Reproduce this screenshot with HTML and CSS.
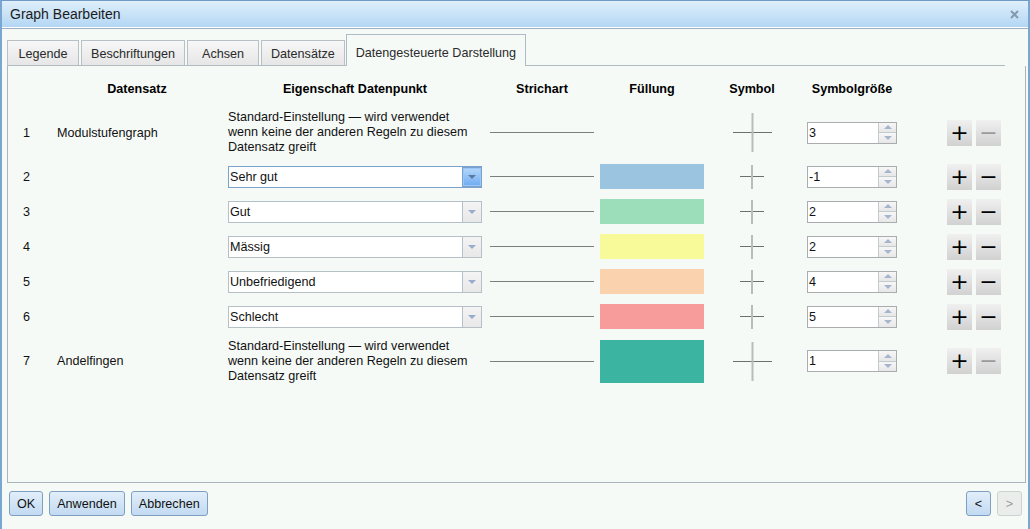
FILE: index.html
```html
<!DOCTYPE html>
<html lang="de">
<head>
    <meta charset="UTF-8">
    <title>Graph Bearbeiten</title>
    <link rel="stylesheet" href="styles.css">
</head>
<body>
<div class="window">
    <div class="titlebar">
        <span>Graph Bearbeiten</span>
        <svg class="close" width="9" height="9" viewBox="0 0 9 9"><path d="M1 1L8 8M8 1L1 8" stroke="#8499ad" stroke-width="2"/></svg>
    </div>

    <div class="tabs">
        <div class="tab">Legende</div>
        <div class="tab">Beschriftungen</div>
        <div class="tab">Achsen</div>
        <div class="tab">Datensätze</div>
        <div class="tab active">Datengesteuerte Darstellung</div>
    </div>

    <div class="panel">
        <div class="rule head">
            <div></div>
            <div class="h-name">Datensatz</div>
            <div class="center">Eigenschaft Datenpunkt</div>
            <div class="h-line">Strichart</div>
            <div class="center">Füllung</div>
            <div class="center">Symbol</div>
            <div class="h-size">Symbolgröße</div>
            <div></div>
        </div>

        <!-- Standardregel -->
        <div class="rule tall">
            <div class="num">1</div>
            <div>Modulstufengraph</div>
            <div class="prop">Standard-Einstellung — wird verwendet<br>wenn keine der anderen Regeln zu diesem<br>Datensatz greift</div>
            <div><div class="stroke"></div></div>
            <div></div>
            <div class="sym"><svg width="39" height="39"><line x1="0" y1="19.5" x2="39" y2="19.5" stroke="#6e706e"/><line x1="19.5" y1="0" x2="19.5" y2="39" stroke="#b9bcb8" stroke-width="2"/></svg></div>
            <div><div class="spinner"><span>3</span><div class="spin"><i class="up"></i><i class="down"></i></div></div></div>
            <div class="actions"><button class="btn-plus">+</button><button class="btn-minus disabled">−</button></div>
        </div>

        <div class="rule">
            <div class="num">2</div>
            <div></div>
            <div><div class="combo focus"><span>Sehr gut</span><div class="trigger"><i></i></div></div></div>
            <div><div class="stroke"></div></div>
            <div><div class="fill" style="background:#9bc4e0"></div></div>
            <div class="sym"><svg width="24" height="24"><line x1="0" y1="11.5" x2="24" y2="11.5" stroke="#6e706e"/><line x1="12" y1="0" x2="12" y2="24" stroke="#b9bcb8" stroke-width="2"/></svg></div>
            <div><div class="spinner"><span>-1</span><div class="spin"><i class="up"></i><i class="down"></i></div></div></div>
            <div class="actions"><button class="btn-plus">+</button><button class="btn-minus">−</button></div>
        </div>

        <div class="rule">
            <div class="num">3</div>
            <div></div>
            <div><div class="combo"><span>Gut</span><div class="trigger"><i></i></div></div></div>
            <div><div class="stroke"></div></div>
            <div><div class="fill" style="background:#9ddeba"></div></div>
            <div class="sym"><svg width="24" height="24"><line x1="0" y1="11.5" x2="24" y2="11.5" stroke="#6e706e"/><line x1="12" y1="0" x2="12" y2="24" stroke="#b9bcb8" stroke-width="2"/></svg></div>
            <div><div class="spinner"><span>2</span><div class="spin"><i class="up"></i><i class="down"></i></div></div></div>
            <div class="actions"><button class="btn-plus">+</button><button class="btn-minus">−</button></div>
        </div>

        <div class="rule">
            <div class="num">4</div>
            <div></div>
            <div><div class="combo"><span>Mässig</span><div class="trigger"><i></i></div></div></div>
            <div><div class="stroke"></div></div>
            <div><div class="fill" style="background:#f8fa99"></div></div>
            <div class="sym"><svg width="24" height="24"><line x1="0" y1="11.5" x2="24" y2="11.5" stroke="#6e706e"/><line x1="12" y1="0" x2="12" y2="24" stroke="#b9bcb8" stroke-width="2"/></svg></div>
            <div><div class="spinner"><span>2</span><div class="spin"><i class="up"></i><i class="down"></i></div></div></div>
            <div class="actions"><button class="btn-plus">+</button><button class="btn-minus">−</button></div>
        </div>

        <div class="rule">
            <div class="num">5</div>
            <div></div>
            <div><div class="combo"><span>Unbefriedigend</span><div class="trigger"><i></i></div></div></div>
            <div><div class="stroke"></div></div>
            <div><div class="fill" style="background:#fad3ae"></div></div>
            <div class="sym"><svg width="24" height="24"><line x1="0" y1="11.5" x2="24" y2="11.5" stroke="#6e706e"/><line x1="12" y1="0" x2="12" y2="24" stroke="#b9bcb8" stroke-width="2"/></svg></div>
            <div><div class="spinner"><span>4</span><div class="spin"><i class="up"></i><i class="down"></i></div></div></div>
            <div class="actions"><button class="btn-plus">+</button><button class="btn-minus">−</button></div>
        </div>

        <div class="rule">
            <div class="num">6</div>
            <div></div>
            <div><div class="combo"><span>Schlecht</span><div class="trigger"><i></i></div></div></div>
            <div><div class="stroke"></div></div>
            <div><div class="fill" style="background:#f89b9b"></div></div>
            <div class="sym"><svg width="24" height="24"><line x1="0" y1="11.5" x2="24" y2="11.5" stroke="#6e706e"/><line x1="12" y1="0" x2="12" y2="24" stroke="#b9bcb8" stroke-width="2"/></svg></div>
            <div><div class="spinner"><span>5</span><div class="spin"><i class="up"></i><i class="down"></i></div></div></div>
            <div class="actions"><button class="btn-plus">+</button><button class="btn-minus">−</button></div>
        </div>

        <!-- Standardregel zweiter Datensatz -->
        <div class="rule last">
            <div class="num">7</div>
            <div>Andelfingen</div>
            <div class="prop">Standard-Einstellung — wird verwendet<br>wenn keine der anderen Regeln zu diesem<br>Datensatz greift</div>
            <div><div class="stroke"></div></div>
            <div><div class="fill big" style="background:#3bb5a1"></div></div>
            <div class="sym"><svg width="39" height="39"><line x1="0" y1="19.5" x2="39" y2="19.5" stroke="#6e706e"/><line x1="19.5" y1="0" x2="19.5" y2="39" stroke="#b9bcb8" stroke-width="2"/></svg></div>
            <div><div class="spinner"><span>1</span><div class="spin"><i class="up"></i><i class="down"></i></div></div></div>
            <div class="actions"><button class="btn-plus">+</button><button class="btn-minus disabled">−</button></div>
        </div>
    </div>

    <div class="footer">
        <button class="button">OK</button>
        <button class="button">Anwenden</button>
        <button class="button">Abbrechen</button>
        <div class="nav">
            <button class="button nav-btn">&lt;</button>
            <button class="button nav-btn off">&gt;</button>
        </div>
    </div>
</div>
</body>
</html>
```

FILE: styles.css
```css
body {
    margin: 0;
    font-family: "Liberation Sans", Arial, sans-serif;
    font-size: 12.6px;
    color: #111;
    background-color: #f6faf7;
}
.window {
    height: 529px;
    box-sizing: border-box;
    border-top: 1px solid #6f9bc6;
    border-left: 2px solid #7aa6d2;
    border-right: 2px solid #7aa6d2;
    overflow: hidden;
}
.titlebar {
    height: 26px;
    line-height: 25px;
    padding: 0 9px 0 8px;
    font-size: 14px;
    color: #1b1b1b;
    background: linear-gradient(#dfeffb, #b3d6f4);
    border-bottom: 1px solid #fff;
    box-shadow: 0 1px 0 #9fb1c0;
    display: flex;
    justify-content: space-between;
    align-items: center;
}
.tabs {
    display: flex;
    align-items: flex-end;
    height: 31px;
    margin: 6px 23px 0 5px;
    border-bottom: 1px solid #b1bcc2;
}
.tab {
    box-sizing: border-box;
    min-width: 72px;
    height: 25px;
    line-height: 23px;
    padding: 2px 9px 0;
    margin-right: 2px;
    text-align: center;
    color: #2a2a2a;
    border: 1px solid #b8c0c5;
    border-bottom: none;
    background: linear-gradient(#f7f7f7, #e6e6e6);
}
.tab.active {
    height: 32px;
    line-height: 26px;
    padding-top: 5px;
    margin: 0 0 -1px -1px;
    background: #f6faf7;
    border-color: #adbcc6;
}
.panel {
    height: 410px;
    margin: 0 2px 0 5px;
    border: 1px solid #aab6bc;
    border-top: none;
    padding-top: 6px;
}
.rule {
    display: grid;
    grid-template-columns: 49px 171px 262px 110px 104px 96px 147px 54px;
    align-items: center;
    height: 35px;
}
.rule.head {
    height: 34px;
    font-weight: bold;
    color: #000;
}
.rule.tall {
    height: 53px;
}
.rule.last {
    height: 54px;
}
.center {
    text-align: center;
    width: 254px;
}
.rule.head .center:nth-child(5),
.rule.head .center:nth-child(6) {
    width: auto;
}
.h-name {
    text-align: center;
    padding-right: 11px;
}
.h-line {
    text-align: center;
    width: 104px;
}
.h-size {
    text-align: center;
    width: 90px;
    margin-left: 7px;
}
.num {
    padding-left: 15px;
}
.prop {
    line-height: 15px;
    white-space: nowrap;
}
.stroke {
    width: 104px;
    height: 1px;
    background-color: #7c7e7c;
}
.fill {
    width: 104px;
    height: 25px;
}
.fill.big {
    height: 43px;
}
.sym {
    display: flex;
    justify-content: center;
}
.sym svg {
    display: block;
}

/* Auswahlfeld */
.combo {
    box-sizing: border-box;
    width: 254px;
    height: 22px;
    border: 1px solid #b6c1c7;
    background: #fff;
    display: flex;
    align-items: center;
    justify-content: space-between;
}
.combo span {
    padding-left: 1px;
}
.combo .trigger {
    box-sizing: border-box;
    width: 19px;
    height: 20px;
    border-left: 1px solid #b6c1c7;
    background: linear-gradient(#f4f4f4, #e8e8e8);
    display: flex;
    align-items: center;
    justify-content: center;
}
.combo .trigger i {
    border-left: 4px solid transparent;
    border-right: 4px solid transparent;
    border-top: 4px solid #9aaccb;
    margin-top: 1px;
}
.combo.focus {
    border-color: #7ba1cf;
}
.combo.focus .trigger {
    border: 1px solid #7ba1cf;
    border-right: none;
    background: linear-gradient(#b5d8fb, #6faaf1);
    box-shadow: inset 0 0 0 1px #9cc6f5;
}
.combo.focus .trigger i {
    border-top-color: #5a7aa2;
}

/* Zahlenfeld */
.spinner {
    box-sizing: border-box;
    width: 90px;
    height: 22px;
    margin-left: 7px;
    border: 1px solid #a9adaf;
    background: #fff;
    display: flex;
    align-items: center;
    justify-content: space-between;
}
.spinner span {
    padding-left: 1px;
}
.spin {
    box-sizing: border-box;
    width: 18px;
    height: 20px;
    border-left: 1px solid #c3cbcf;
    display: flex;
    flex-direction: column;
}
.spin i {
    flex: 1;
    display: flex;
    align-items: center;
    justify-content: center;
    background: linear-gradient(#f7f7f7, #e7e7e7);
}
.spin i.up {
    border-bottom: 1px solid #c3cbcf;
}
.spin i::after {
    content: "";
    border-left: 4px solid transparent;
    border-right: 4px solid transparent;
}
.spin i.up::after {
    border-bottom: 4px solid #a4b5cd;
}
.spin i.down::after {
    border-top: 4px solid #a4b5cd;
}

/* Plus / Minus */
.actions {
    display: flex;
    gap: 4px;
}
.actions button {
    width: 25px;
    height: 26px;
    padding: 0;
    border: none;
    background: linear-gradient(#f0f0f0, #d1d1d1);
    font-family: "DejaVu Sans", sans-serif;
    font-size: 22px;
    line-height: 26px;
    color: #000;
}
.actions button.disabled {
    color: #9a9a9a;
}

/* Fussleiste */
.footer {
    display: flex;
    gap: 6px;
    margin-top: 8px;
    padding: 0 6px 0 7px;
}
.button {
    box-sizing: border-box;
    height: 25px;
    padding: 0 7px;
    border: 1px solid #7f9fc0;
    border-radius: 3px;
    background: linear-gradient(#e2eefa, #c2daf2);
    font-family: "Liberation Sans", Arial, sans-serif;
    font-size: 12.6px;
    color: #111;
}
.nav {
    margin-left: auto;
    display: flex;
    gap: 6px;
}
.nav-btn {
    width: 25px;
    padding: 0;
}
.nav-btn.off {
    border-color: #cfd2d3;
    background: #ebedec;
    color: #9a9a9a;
}
```
